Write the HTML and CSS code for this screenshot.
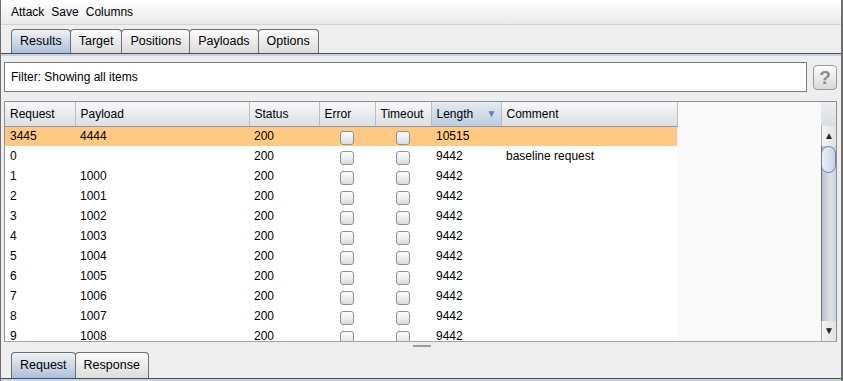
FILE: index.html
```html
<!DOCTYPE html>
<html>
	<head>
		<meta charset="UTF-8">
		<title>Intruder attack</title>
		<link rel="stylesheet" href="styles.css">
	</head>
	<body>
		<div id="frame">
			<!--菜单-->
			<div class="menubar">
				<span>Attack</span>
				<span>Save</span>
				<span>Columns</span>
			</div>

			<!--标签页-->
			<ul class="tabs">
				<li class="current">Results</li>
				<li>Target</li>
				<li>Positions</li>
				<li>Payloads</li>
				<li>Options</li>
			</ul>
			<div class="tabline"></div>

			<div class="panel">
				<div class="filterRow">
					<div class="filter">Filter: Showing all items</div>
					<div class="help">?</div>
				</div>

				<div class="results">
					<div class="grid">
						<table>
							<colgroup>
								<col style="width:70px">
								<col style="width:174px">
								<col style="width:70px">
								<col style="width:56px">
								<col style="width:56px">
								<col style="width:70px">
								<col style="width:176px">
							</colgroup>
							<thead>
								<tr>
									<th>Request</th>
									<th>Payload</th>
									<th>Status</th>
									<th>Error</th>
									<th>Timeout</th>
									<th class="sorted">Length<span class="arrow">&#9660;</span></th>
									<th>Comment</th>
								</tr>
							</thead>
							<tbody>
								<tr class="hit"><td>3445</td><td>4444</td><td>200</td><td class="cb"><i></i></td><td class="cb"><i></i></td><td>10515</td><td></td></tr>
								<tr><td>0</td><td></td><td>200</td><td class="cb"><i></i></td><td class="cb"><i></i></td><td>9442</td><td>baseline request</td></tr>
								<tr><td>1</td><td>1000</td><td>200</td><td class="cb"><i></i></td><td class="cb"><i></i></td><td>9442</td><td></td></tr>
								<tr><td>2</td><td>1001</td><td>200</td><td class="cb"><i></i></td><td class="cb"><i></i></td><td>9442</td><td></td></tr>
								<tr><td>3</td><td>1002</td><td>200</td><td class="cb"><i></i></td><td class="cb"><i></i></td><td>9442</td><td></td></tr>
								<tr><td>4</td><td>1003</td><td>200</td><td class="cb"><i></i></td><td class="cb"><i></i></td><td>9442</td><td></td></tr>
								<tr><td>5</td><td>1004</td><td>200</td><td class="cb"><i></i></td><td class="cb"><i></i></td><td>9442</td><td></td></tr>
								<tr><td>6</td><td>1005</td><td>200</td><td class="cb"><i></i></td><td class="cb"><i></i></td><td>9442</td><td></td></tr>
								<tr><td>7</td><td>1006</td><td>200</td><td class="cb"><i></i></td><td class="cb"><i></i></td><td>9442</td><td></td></tr>
								<tr><td>8</td><td>1007</td><td>200</td><td class="cb"><i></i></td><td class="cb"><i></i></td><td>9442</td><td></td></tr>
								<tr><td>9</td><td>1008</td><td>200</td><td class="cb"><i></i></td><td class="cb"><i></i></td><td>9442</td><td></td></tr>
							</tbody>
						</table>
					</div>
					<!--滚动条-->
					<div class="vscroll">
						<div class="corner"></div>
						<div class="btn up">&#9650;</div>
						<div class="track"><div class="thumb"></div></div>
						<div class="btn down">&#9660;</div>
					</div>
				</div>
			</div>

			<div class="divider"><span class="grip"></span></div>

			<ul class="tabs bottom">
				<li class="current">Request</li>
				<li>Response</li>
			</ul>
			<div class="tabline"></div>
		</div>
	</body>
</html>
```

FILE: styles.css
```css
*{
	padding: 0;
	margin: 0;
	box-sizing: border-box;
}
body{
	background-color: #eeeeee;
	font-family: "Liberation Sans", Arial, sans-serif;
	font-size: 12px;
	color: #000000;
}
#frame{
	width: 843px;
	height: 381px;
	border-left: 1px solid #6e6e6e;
	border-right: 2px solid #6e6e6e;
	overflow: hidden;
	display: flex;
	flex-direction: column;
}

/*菜单*/
.menubar{
	height: 25px;
	display: flex;
	align-items: center;
	gap: 7px;
	padding-left: 10px;
	background: linear-gradient(#ffffff, #e9e9e9);
	border-bottom: 1px solid #d2d2d2;
}

/*标签*/
.tabs{
	list-style: none;
	display: flex;
	height: 24px;
	margin-top: 4px;
	padding-left: 10px;
}
.tabs li{
	height: 24px;
	line-height: 23px;
	padding: 0 8px;
	border: 1px solid #6f6f6f;
	border-bottom: none;
	border-radius: 4px 4px 0 0;
	background: linear-gradient(#fbfbfb, #dcdcdc);
	margin-right: -1px;
	font-size: 12.5px;
}
.tabs li.current{
	background: linear-gradient(#eef2f6, #abc1d8);
}
.tabline{
	height: 3px;
	border-top: 1px solid #4e4e4e;
	background-color: #c3d3e4;
}
.tabs.bottom{
	margin-top: 0;
	height: 26px;
}
.tabs.bottom li{
	height: 26px;
	line-height: 25px;
}

.panel{
	padding: 6px 4px 0 3px;
}
.filterRow{
	display: flex;
	align-items: center;
	height: 30px;
}
.filter{
	flex: 1;
	height: 30px;
	line-height: 28px;
	padding-left: 6px;
	background-color: #ffffff;
	border: 1px solid #7b7b7b;
}
.help{
	width: 24px;
	height: 25px;
	margin-left: 6px;
	border: 1px solid #9a9a9a;
	border-radius: 4px;
	background: linear-gradient(#fcfcfc, #d9d9d9);
	color: #8d8d8d;
	font-size: 19px;
	font-weight: bold;
	text-align: center;
	line-height: 23px;
}

/*结果表*/
.results{
	margin-top: 9px;
	height: 241px;
	display: flex;
	border: 1px solid #8b9098;
	border-bottom-color: #a0a4aa;
}
.grid{
	flex: 1;
	background-color: #f9f9f9;
	overflow: hidden;
}
.grid table{
	width: 672px;
	table-layout: fixed;
	border-collapse: collapse;
}
.grid th{
	height: 24px;
	font-weight: normal;
	text-align: left;
	padding-left: 5px;
	background: linear-gradient(#f6f7f8, #dcdfe3);
	border-right: 1px solid #b9bec5;
	border-bottom: 1px solid #8f98a3;
	white-space: nowrap;
	overflow: hidden;
}
.grid th.sorted{
	background: linear-gradient(#e3eaf2, #bccde0);
	position: relative;
}
.grid th .arrow{
	position: absolute;
	right: 4px;
	top: 6px;
	font-size: 10px;
	color: #5d84b1;
}
.grid td{
	height: 20px;
	padding-left: 5px;
	background-color: #ffffff;
	white-space: nowrap;
}
.grid tr.hit td{
	background-color: #ffc982;
}
.grid td.cb{
	padding-left: 0;
	text-align: center;
}
.grid td.cb i{
	display: inline-block;
	width: 14px;
	height: 14px;
	margin-top: 3px;
	border: 1px solid #8c929a;
	border-radius: 3px;
	background: linear-gradient(#fdfdfd, #d9dce0);
	vertical-align: top;
}

/*滚动条*/
.vscroll{
	width: 15px;
	display: flex;
	flex-direction: column;
	background-color: #f0f0f0;
}
.vscroll .corner{
	height: 24px;
	background: linear-gradient(#eceef0, #dadde1);
}
.vscroll .btn{
	height: 20px;
	font-size: 10px;
	text-align: center;
	line-height: 20px;
	color: #222222;
	background: linear-gradient(90deg, #f4f4f4, #e2e2e2);
	border-left: 1px solid #a6abb2;
}
.vscroll .track{
	flex: 1;
	border-left: 1px solid #6b727c;
	background: linear-gradient(90deg, #b9c0c8, #dfe3e8 60%, #cdd2d8);
}
.vscroll .thumb{
	height: 27px;
	margin-left: -1px;
	border: 1px solid #6f8299;
	border-radius: 9px;
	background: linear-gradient(90deg, #e9f1f8, #c1d5e8);
}

.divider{
	height: 10px;
	position: relative;
}
.divider .grip{
	position: absolute;
	left: 412px;
	top: 3px;
	width: 18px;
	height: 2px;
	background-color: #9c9c9c;
}
```
